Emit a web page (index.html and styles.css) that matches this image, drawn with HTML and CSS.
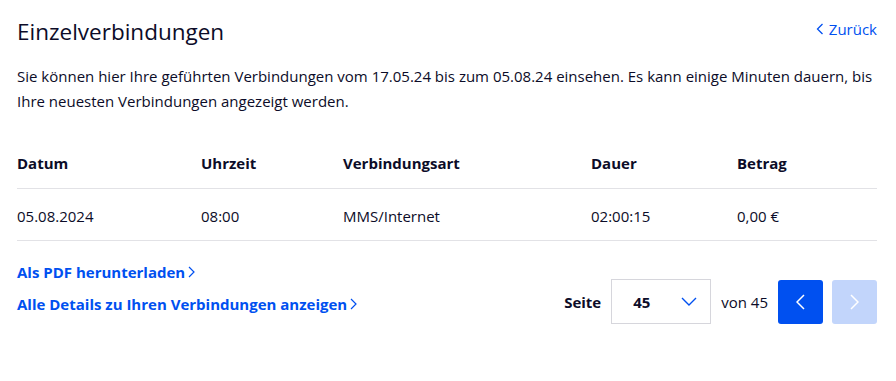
FILE: index.html
```html
<!DOCTYPE html>
<html lang="de">
<head>
<meta charset="utf-8">
<title>Einzelverbindungen</title>
<link rel="stylesheet" href="styles.css">
</head>
<body>
<div class="page">
  <div class="head">
    <h1 class="title">Einzelverbindungen</h1>
    <a class="back" href="#">
      <svg class="chev" width="8" height="12" viewBox="0 0 8 12"><path d="M6.5 1 1.5 6l5 5" fill="none" stroke="currentColor" stroke-width="1.3"/></svg>
      Zurück
    </a>
  </div>
  <p class="intro">Sie können hier Ihre geführten Verbindungen vom 17.05.24 bis zum 05.08.24 einsehen. Es kann einige Minuten dauern, bis Ihre neuesten Verbindungen angezeigt werden.</p>

  <table class="calls">
    <thead>
      <tr>
        <th class="c-date">Datum</th>
        <th class="c-time">Uhrzeit</th>
        <th class="c-type">Verbindungsart</th>
        <th class="c-dur">Dauer</th>
        <th class="c-sum">Betrag</th>
      </tr>
    </thead>
    <tbody>
      <tr>
        <td>05.08.2024</td>
        <td>08:00</td>
        <td>MMS/Internet</td>
        <td>02:00:15</td>
        <td>0,00 €</td>
      </tr>
    </tbody>
  </table>

  <div class="foot">
    <div class="links">
      <a href="#">Als PDF herunterladen<svg class="chev" width="7" height="12" viewBox="0 0 7 12"><path d="M1 1l5 5-5 5" fill="none" stroke="currentColor" stroke-width="1.2"/></svg></a>
      <a href="#">Alle Details zu Ihren Verbindungen anzeigen<svg class="chev" width="7" height="12" viewBox="0 0 7 12"><path d="M1 1l5 5-5 5" fill="none" stroke="currentColor" stroke-width="1.2"/></svg></a>
    </div>
    <div class="pager">
      <span class="lbl">Seite</span>
      <div class="select">
        <span class="num">45</span>
        <svg width="16" height="9" viewBox="0 0 16 9"><path d="M1 1l7 7 7-7" fill="none" stroke="#0050f0" stroke-width="1.4"/></svg>
      </div>
      <span class="of">von 45</span>
      <button class="nav prev"><svg width="9" height="16" viewBox="0 0 9 16"><path d="M8 1 1 8l7 7" fill="none" stroke="#fff" stroke-width="1.5"/></svg></button>
      <button class="nav next"><svg width="9" height="16" viewBox="0 0 9 16"><path d="M1 1l7 7-7 7" fill="none" stroke="#fff" stroke-width="1.5"/></svg></button>
    </div>
  </div>
</div>
</body>
</html>
```

FILE: styles.css
```css
body
{
	margin: 0;
	background-color: #fff;
	color: #0c0c28;
	font-family: "Open Sans", Arial, sans-serif;
	font-size: 15px;
}
.page
{
	padding: 14px 19px 0 17px;
}
.head
{
	display: flex;
	justify-content: space-between;
	align-items: flex-start;
}
.title
{
	margin: 2px 0 0 0;
	font-size: 22.5px;
	font-weight: 400;
	line-height: 32px;
}
.back
{
	display: flex;
	align-items: center;
	gap: 5px;
	margin-top: 5px;
	color: #0050f0;
	text-decoration: none;
	font-size: 15px;
}
.intro
{
	margin: 16px 0 0 0;
	line-height: 25px;
}
.calls
{
	width: 860px;
	margin-top: 26px;
	border-collapse: collapse;
}
.calls th, .calls td
{
	padding: 0;
	text-align: left;
	vertical-align: middle;
}
.calls th
{
	height: 46px;
	font-weight: 700;
	border-bottom: 1px solid #e2e2e6;
	padding-bottom: 2px;
}
.calls td
{
	height: 49px;
	border-bottom: 1px solid #e2e2e6;
	padding-top: 2px;
}
.c-date { width: 184px; }
.c-time { width: 142px; }
.c-type { width: 248px; }
.c-dur { width: 146px; }
.foot
{
	display: flex;
	justify-content: space-between;
	align-items: flex-end;
	margin-top: 21px;
}
.links
{
	display: flex;
	flex-direction: column;
	gap: 12px;
	padding-bottom: 10px;
}
.links a
{
	display: flex;
	align-items: center;
	gap: 3px;
	color: #0050f0;
	font-weight: 700;
	text-decoration: none;
}
.pager
{
	display: flex;
	align-items: center;
}
.lbl
{
	font-weight: 700;
	margin-right: 10px;
}
.select
{
	box-sizing: border-box;
	width: 100px;
	height: 45px;
	border: 1px solid #d6d6dc;
	display: flex;
	align-items: center;
	justify-content: space-between;
	padding: 0 13px 0 21px;
}
.num
{
	font-weight: 700;
}
.of
{
	margin: 0 10px;
}
.nav
{
	width: 45px;
	height: 44px;
	border: 0;
	border-radius: 3px;
	display: flex;
	align-items: center;
	justify-content: center;
	padding: 0;
}
.prev
{
	background-color: #0050f0;
}
.next
{
	margin-left: 9px;
	background-color: #c2d5fb;
}
```
